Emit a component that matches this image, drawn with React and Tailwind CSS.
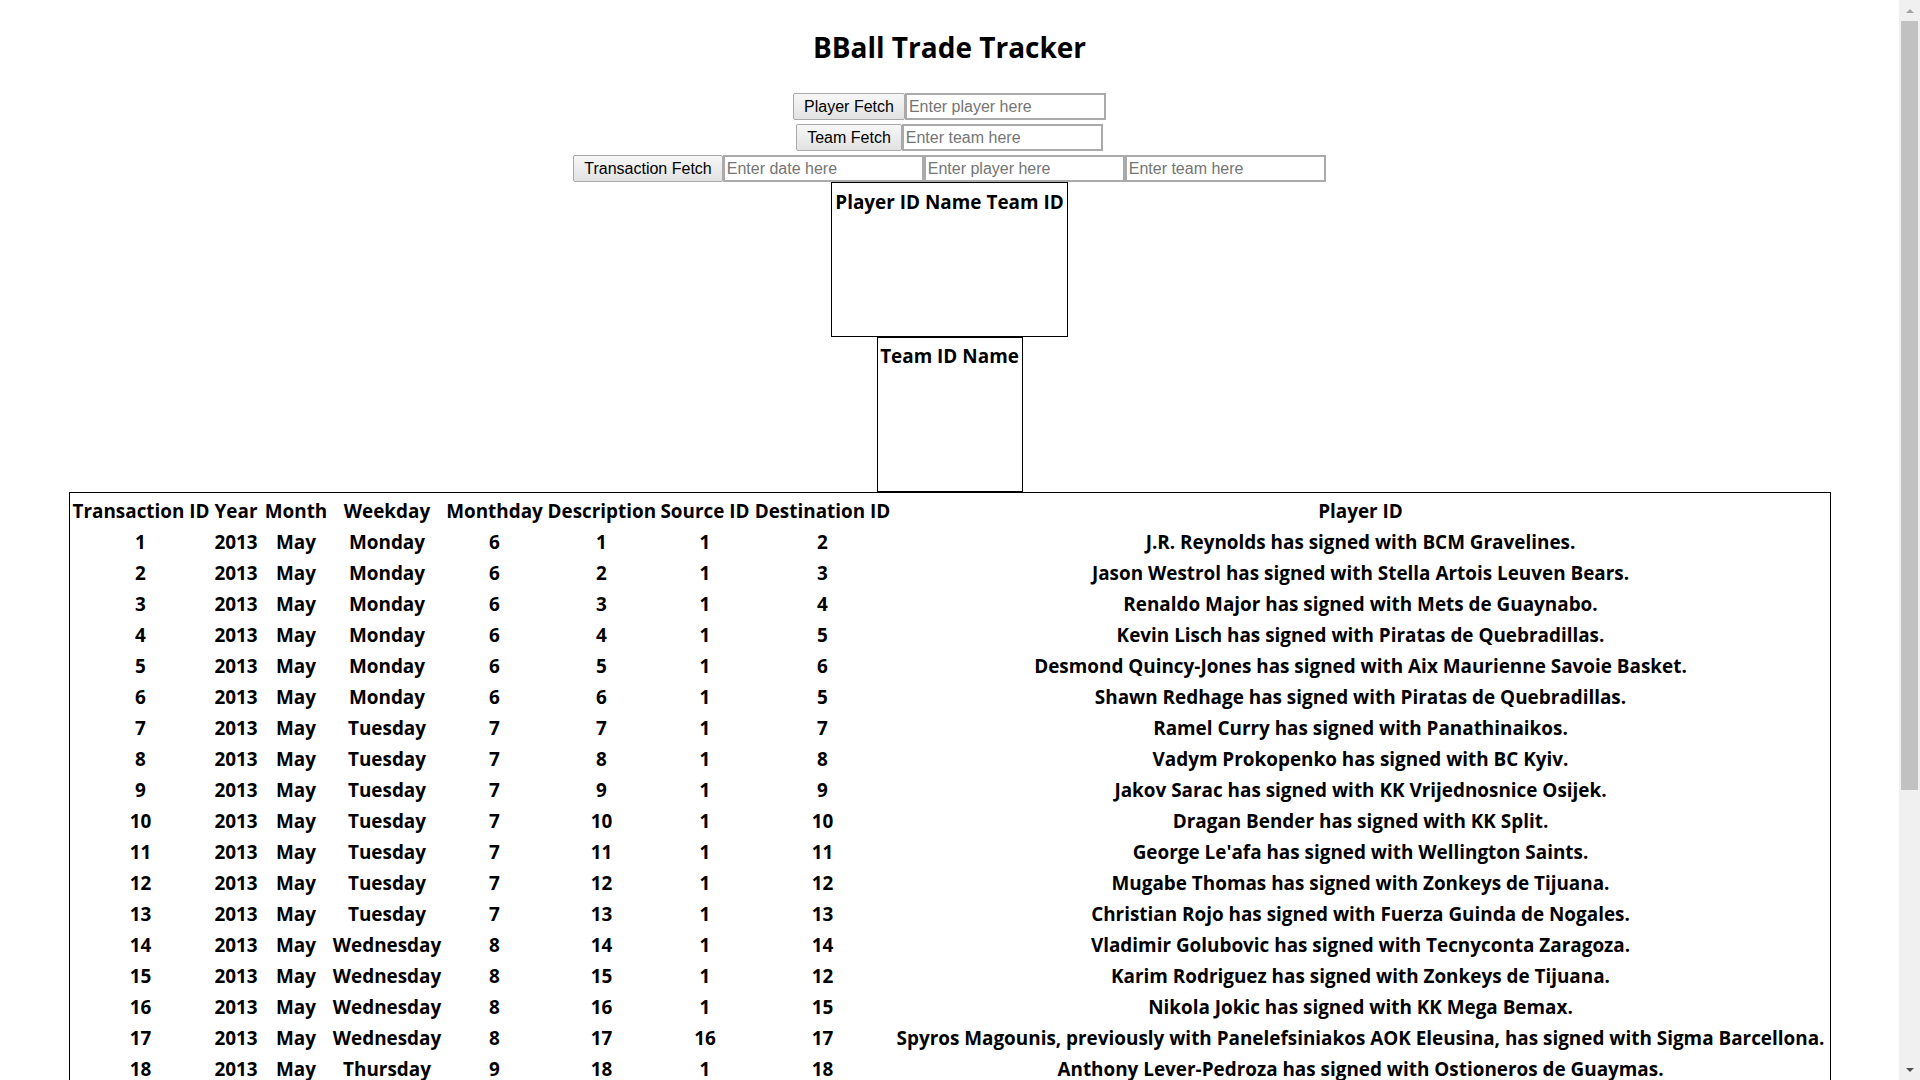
import React from 'react'

const ROWS = [
  [1, 'Monday', 6, 1, 1, 2, 'J.R. Reynolds has signed with BCM Gravelines.'],
  [2, 'Monday', 6, 2, 1, 3, 'Jason Westrol has signed with Stella Artois Leuven Bears.'],
  [3, 'Monday', 6, 3, 1, 4, 'Renaldo Major has signed with Mets de Guaynabo.'],
  [4, 'Monday', 6, 4, 1, 5, 'Kevin Lisch has signed with Piratas de Quebradillas.'],
  [5, 'Monday', 6, 5, 1, 6, 'Desmond Quincy-Jones has signed with Aix Maurienne Savoie Basket.'],
  [6, 'Monday', 6, 6, 1, 5, 'Shawn Redhage has signed with Piratas de Quebradillas.'],
  [7, 'Tuesday', 7, 7, 1, 7, 'Ramel Curry has signed with Panathinaikos.'],
  [8, 'Tuesday', 7, 8, 1, 8, 'Vadym Prokopenko has signed with BC Kyiv.'],
  [9, 'Tuesday', 7, 9, 1, 9, 'Jakov Sarac has signed with KK Vrijednosnice Osijek.'],
  [10, 'Tuesday', 7, 10, 1, 10, 'Dragan Bender has signed with KK Split.'],
  [11, 'Tuesday', 7, 11, 1, 11, "George Le'afa has signed with Wellington Saints."],
  [12, 'Tuesday', 7, 12, 1, 12, 'Mugabe Thomas has signed with Zonkeys de Tijuana.'],
  [13, 'Tuesday', 7, 13, 1, 13, 'Christian Rojo has signed with Fuerza Guinda de Nogales.'],
  [14, 'Wednesday', 8, 14, 1, 14, 'Vladimir Golubovic has signed with Tecnyconta Zaragoza.'],
  [15, 'Wednesday', 8, 15, 1, 12, 'Karim Rodriguez has signed with Zonkeys de Tijuana.'],
  [16, 'Wednesday', 8, 16, 1, 15, 'Nikola Jokic has signed with KK Mega Bemax.'],
  [17, 'Wednesday', 8, 17, 16, 17, 'Spyros Magounis, previously with Panelefsiniakos AOK Eleusina, has signed with Sigma Barcellona.'],
  [18, 'Thursday', 9, 18, 1, 18, 'Anthony Lever-Pedroza has signed with Ostioneros de Guaymas.'],
]

const btn =
  'h-[27px] px-[10px] border border-[#a9a9a9] rounded-[2px] bg-gradient-to-b from-[#f7f7f7] to-[#e2e2e2] text-[16px] text-black leading-none'
const field =
  'w-[201px] h-[27px] px-[2px] border-2 border-[#aaaaaa] bg-white text-[16px] text-black placeholder:text-[#757575] outline-none'
const cell = 'pt-[5px] pb-px px-px'

function Scrollbar() {
  return (
    <div className="w-[21px] h-[1080px] shrink-0 bg-[#f0f0f0] flex flex-col items-center">
      <div className="h-[21px] w-full flex items-center justify-center">
        <div className="w-0 h-0 border-x-[4px] border-x-transparent border-b-[4px] border-b-[#a3a3a3]" />
      </div>
      <div className="w-[17px] h-[769px] bg-[#c1c1c1]" />
      <div className="flex-1" />
      <div className="h-[21px] w-full flex items-center justify-center">
        <div className="w-0 h-0 border-x-[4px] border-x-transparent border-t-[4px] border-t-[#505050]" />
      </div>
    </div>
  )
}

export default function App() {
  return (
    <div className="flex h-screen overflow-hidden bg-white text-black">
      <main className="flex-1 overflow-hidden font-['Open_Sans',sans-serif]">
        <h1 className="mt-[28px] text-center text-[28px] leading-[39px] font-bold">BBall Trade Tracker</h1>

        <div className="mt-[26px] flex flex-col gap-[4px] font-['Liberation_Sans',Arial,sans-serif]">
          <div className="flex justify-center">
            <button type="button" className={btn}>Player Fetch</button>
            <input className={field} placeholder="Enter player here" />
          </div>
          <div className="flex justify-center">
            <button type="button" className={btn}>Team Fetch</button>
            <input className={field} placeholder="Enter team here" />
          </div>
          <div className="flex justify-center">
            <button type="button" className={btn}>Transaction Fetch</button>
            <input className={field} placeholder="Enter date here" />
            <input className={field} placeholder="Enter player here" />
            <input className={field} placeholder="Enter team here" />
          </div>
        </div>

        <div className="flex flex-col items-center text-[18.9px] leading-[23px] font-bold">
          <div className="w-[237px] h-[155px] border border-black flex justify-center gap-[5px] pt-[8px]">
            <span>Player ID</span>
            <span>Name</span>
            <span>Team ID</span>
          </div>
          <div className="w-[146px] h-[155px] border border-black flex justify-center gap-[5px] pt-[7px]">
            <span>Team ID</span>
            <span>Name</span>
          </div>

          <table className="w-[1762px] table-fixed border-separate border-spacing-[2px] border border-black text-center">
            <thead>
              <tr>
                <th className={`w-[138px] whitespace-nowrap ${cell}`}>Transaction ID</th>
                <th className={`w-[49px] whitespace-nowrap ${cell}`}>Year</th>
                <th className={`w-[67px] whitespace-nowrap ${cell}`}>Month</th>
                <th className={`w-[111px] whitespace-nowrap ${cell}`}>Weekday</th>
                <th className={`w-[100px] whitespace-nowrap ${cell}`}>Monthday</th>
                <th className={`w-[110px] whitespace-nowrap ${cell}`}>Description</th>
                <th className={`w-[93px] whitespace-nowrap ${cell}`}>Source ID</th>
                <th className={`w-[138px] whitespace-nowrap ${cell}`}>Destination ID</th>
                <th className={`whitespace-nowrap ${cell}`}>Player ID</th>
              </tr>
            </thead>
            <tbody>
              {ROWS.map(([id, day, md, desc, src, dst, text]) => (
                <tr key={id}>
                  <td className={cell}>{id}</td>
                  <td className={cell}>2013</td>
                  <td className={cell}>May</td>
                  <td className={cell}>{day}</td>
                  <td className={cell}>{md}</td>
                  <td className={cell}>{desc}</td>
                  <td className={cell}>{src}</td>
                  <td className={cell}>{dst}</td>
                  <td className={`whitespace-nowrap ${cell}`}>{text}</td>
                </tr>
              ))}
            </tbody>
          </table>
        </div>
      </main>
      <Scrollbar />
    </div>
  )
}
